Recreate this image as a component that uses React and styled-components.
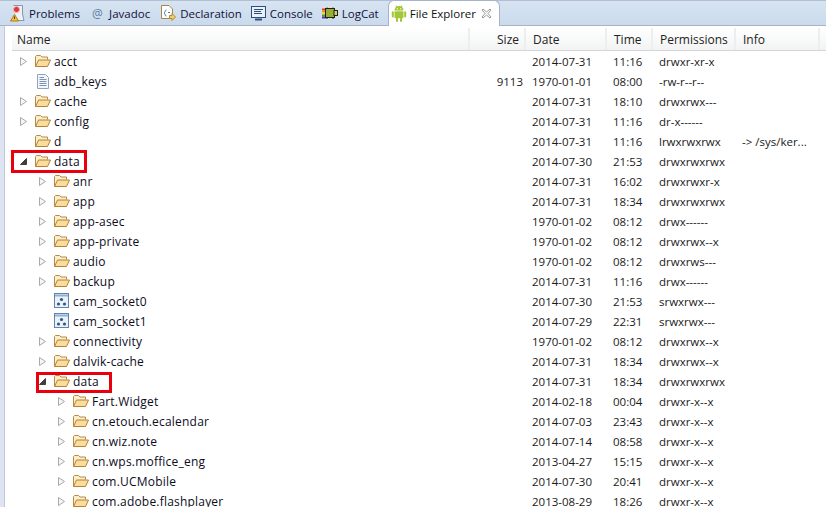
import React from 'react';
import styled, { createGlobalStyle } from 'styled-components';

const GlobalStyle = createGlobalStyle`
    html, body {
        margin: 0;
        padding: 0;
        background: #fff;
    }
    body {
        font-family: "Open Sans", "Noto Sans", sans-serif;
        font-size: 11.5px;
        color: #111;
    }
`

const Page = styled.div`
    width: 826px;
    height: 507px;
    overflow: hidden;
    display: flex;
    flex-direction: column;
    background: #dfe4f2;
`

const TabBar = styled.div`
    height: 26px;
    box-sizing: border-box;
    display: flex;
    align-items: stretch;
    padding-left: 10px;
    background: linear-gradient(#d6e3f1, #cbdbec);
    border-top: 1px solid #b4bdd6;
    border-bottom: 1px solid #a7b3c8;
`

const Tab = styled.div`
    display: flex;
    align-items: center;
    gap: ${p => p.$gap || 4}px;
    margin-right: ${p => p.$right || 0}px;
    color: #10103a;
    white-space: nowrap;
`

const ActiveTab = styled.div`
    height: 26px;
    width: 112px;
    box-sizing: border-box;
    margin-top: -1px;
    padding-left: 2px;
    display: flex;
    align-items: center;
    gap: 3px;
    background: #fff;
    border: 1px solid #a7b3c8;
    border-bottom: none;
    border-radius: 6px 6px 0 0;
    color: #111;
    white-space: nowrap;
`

const AtSign = styled.span`
    width: 12px;
    color: #5b7f9f;
    font-size: 12px;
`

const CloseMark = styled.svg`
    margin-left: 2px;
`

const Body = styled.div`
    flex: 1;
    min-height: 0;
    margin-left: 4px;
    padding-left: 7px;
    padding-top: 2px;
    background: #fff;
    border-left: 1px solid #c3c9dc;
`

const Columns = styled.div`
    display: grid;
    grid-template-columns: 458px 56px 81px 46px 83px 84px 1fr;
    align-items: center;
`

const Header = styled(Columns)`
    height: 22px;
    font-size: 12px;
    background: linear-gradient(#fff, #f2f3f4);
    border-bottom: 1px solid #d5d5d5;
`

const HeaderCell = styled.div`
    height: 100%;
    box-sizing: border-box;
    display: flex;
    align-items: center;
    justify-content: ${p => (p.$right ? 'flex-end' : 'flex-start')};
    padding: ${p => (p.$right ? '0 5px 0 0' : '0 0 0 7px')};
    padding-left: ${p => (p.$first ? 5 : 7)}px;
    border-right: ${p => (p.$last ? 'none' : '2px solid #eceef0')};
    color: #222;
`

const Row = styled(Columns)`
    height: 20px;
`

const NameCell = styled.div`
    position: relative;
    height: 20px;
    display: flex;
    align-items: center;
    padding-left: ${p => 7 + p.$level * 19}px;
`

const Twist = styled.span`
    width: 9px;
    height: 9px;
    margin-right: 7px;
    display: flex;
`

const Label = styled.span`
    margin-left: 3px;
    font-size: 12px;
    letter-spacing: .2px;
    color: #0c0c1c;
    white-space: nowrap;
`

const Highlight = styled.div`
    position: absolute;
    left: ${p => p.$level * 25 - 1}px;
    top: ${p => p.$level * 2 - 1}px;
    width: 76px;
    height: ${p => 23 - p.$level * 2}px;
    box-sizing: border-box;
    border: 3px solid #e8000f;
`

const Cell = styled.div`
    padding-left: 6px;
    white-space: nowrap;
    color: #1a1a1a;
`

const SizeCell = styled.div`
    padding-right: 3px;
    text-align: right;
    color: #1a1a1a;
`

const Collapsed = () => (
    <svg width="9" height="9" viewBox="0 0 9 9">
        <path d="M1.5.5 7.5 4.5 1.5 8.5Z" fill="#f6f6f6" stroke="#a9a9a9" />
    </svg>
)

const Expanded = () => (
    <svg width="9" height="9" viewBox="0 0 9 9">
        <path d="M7.5 1.5V7.5H1.5Z" fill="#3f3f3f" stroke="#3f3f3f" />
    </svg>
)

const FolderIcon = () => (
    <svg width="16" height="14" viewBox="0 0 16 14">
        <path d="M.5 12.5V2.5L1.5 1.5H5.5L7 3H12.5V5.5" fill="#fbeecb" stroke="#b78b46" />
        <path d="M.5 12.5 3.5 6H15.5L12.5 12.5Z" fill="#fadd9a" stroke="#b4823a" strokeLinejoin="round" />
    </svg>
)

const FileIcon = () => (
    <svg width="16" height="16" viewBox="0 0 16 16">
        <path d="M2.5 1.5H10.5L13.5 4.5V15.5H2.5Z" fill="#f2f6fb" stroke="#8fa3bd" />
        <path d="M4.5 6.5H11.5M4.5 8.5H11.5M4.5 10.5H11.5M4.5 12.5H11.5M4.5 4.5H9" stroke="#7d93b4" />
    </svg>
)

const SocketIcon = () => (
    <svg width="16" height="16" viewBox="0 0 16 16">
        <rect x=".5" y=".5" width="14" height="14" fill="#eaf1f9" stroke="#5e83ad" />
        <path d="M1 2.5H14" stroke="#8fb0d4" strokeWidth="2" />
        <circle cx="7.5" cy="6.5" r="1.6" fill="#33587f" />
        <circle cx="4.5" cy="11" r="1.6" fill="#33587f" />
        <circle cx="10.5" cy="11" r="1.6" fill="#33587f" />
    </svg>
)

const ProblemsIcon = () => (
    <svg width="15" height="17" viewBox="0 0 15 17">
        <path d="M3.5.5H12.5V9L14 15.5H7" fill="#eef1f5" stroke="#8b94a8" />
        <circle cx="6.5" cy="4.5" r="3" fill="#e0353a" stroke="#f3b5b5" />
        <path d="M4.5 9.5 8.5 16H.5Z" fill="#f1c232" stroke="#b7791f" strokeLinejoin="round" />
        <path d="M4.5 11.5V14" stroke="#5a3b0c" />
    </svg>
)

const DeclarationIcon = () => (
    <svg width="16" height="17" viewBox="0 0 16 17">
        <path d="M1.5.5H9L12.5 4V13.5H1.5Z" fill="#fff" stroke="#a5854e" />
        <path d="M6.5 5C4.5 5 5.5 7.5 4 8 5.5 8.5 4.5 11 6.5 11" fill="none" stroke="#3f79ad" />
        <path d="M8 7.5H10" stroke="#3f79ad" />
        <path d="M9.5 10.5H12V8.5L15.5 12 12 15.5V13.5H9.5Z" fill="#f3cf62" stroke="#b08a2c" />
    </svg>
)

const ConsoleIcon = () => (
    <svg width="15" height="15" viewBox="0 0 15 15">
        <rect x=".5" y=".5" width="14" height="11" fill="#e9f0f8" stroke="#2f4f78" />
        <path d="M3 3.5H12M3 5.5H10M3 7.5H11" stroke="#2f4f78" />
        <path d="M4 13.5H11" stroke="#2f4f78" strokeWidth="2" />
    </svg>
)

const LogCatIcon = () => (
    <svg width="16" height="12" viewBox="0 0 16 12">
        <path d="M0 1.5H4V3.5H0Z" fill="#e53935" />
        <path d="M0 3.5H4V5.5H0Z" fill="#fb8c00" />
        <path d="M0 5.5H4V7.5H0Z" fill="#fdd835" />
        <path d="M0 7.5H4V9.5H0Z" fill="#43a047" />
        <path d="M0 9.5H4V11.5H0Z" fill="#5e35b1" />
        <rect x="3.5" y="1.5" width="9" height="9" fill="#9aab3a" stroke="#1f2408" />
        <rect x="12" y="3.5" width="3.5" height="5" fill="#c9d27a" stroke="#1f2408" />
        <path d="M5 .5V2M11 .5V2M5 10V12M11 10V12" stroke="#1f2408" />
    </svg>
)

const AndroidIcon = () => (
    <svg width="16" height="17" viewBox="0 0 16 17">
        <g fill="#a4c639">
            <path d="M3.5 5.5A4.5 4.5 0 0 1 12.5 5.5Z" />
            <rect x="3.5" y="6.3" width="9" height="7" rx="1" />
            <rect x=".8" y="6.3" width="2" height="6.2" rx="1" />
            <rect x="13.2" y="6.3" width="2" height="6.2" rx="1" />
            <rect x="5" y="12.5" width="2" height="4.5" rx="1" />
            <rect x="9" y="12.5" width="2" height="4.5" rx="1" />
        </g>
        <path d="M5 .5 6 2.5M11 .5 10 2.5" stroke="#a4c639" />
        <circle cx="6.2" cy="3.7" r=".6" fill="#fff" />
        <circle cx="9.8" cy="3.7" r=".6" fill="#fff" />
    </svg>
)

const rows = [
    { name: 'acct', level: 0, date: '2014-07-31', time: '11:16', perm: 'drwxr-xr-x' },
    { name: 'adb_keys', level: 0, type: 'file', size: '9113', date: '1970-01-01', time: '08:00', perm: '-rw-r--r--' },
    { name: 'cache', level: 0, date: '2014-07-31', time: '18:10', perm: 'drwxrwx---' },
    { name: 'config', level: 0, date: '2014-07-31', time: '11:16', perm: 'dr-x------' },
    { name: 'd', level: 0, noTwist: true, date: '2014-07-31', time: '11:16', perm: 'lrwxrwxrwx', info: '-> /sys/ker...' },
    { name: 'data', level: 0, open: true, marked: true, date: '2014-07-30', time: '21:53', perm: 'drwxrwxrwx' },
    { name: 'anr', level: 1, date: '2014-07-31', time: '16:02', perm: 'drwxrwxr-x' },
    { name: 'app', level: 1, date: '2014-07-31', time: '18:34', perm: 'drwxrwxrwx' },
    { name: 'app-asec', level: 1, date: '1970-01-02', time: '08:12', perm: 'drwx------' },
    { name: 'app-private', level: 1, date: '1970-01-02', time: '08:12', perm: 'drwxrwx--x' },
    { name: 'audio', level: 1, date: '1970-01-02', time: '08:12', perm: 'drwxrws---' },
    { name: 'backup', level: 1, date: '2014-07-31', time: '11:16', perm: 'drwx------' },
    { name: 'cam_socket0', level: 1, type: 'socket', date: '2014-07-30', time: '21:53', perm: 'srwxrwx---' },
    { name: 'cam_socket1', level: 1, type: 'socket', date: '2014-07-29', time: '22:31', perm: 'srwxrwx---' },
    { name: 'connectivity', level: 1, date: '1970-01-02', time: '08:12', perm: 'drwxrwx--x' },
    { name: 'dalvik-cache', level: 1, date: '2014-07-31', time: '18:34', perm: 'drwxrwx--x' },
    { name: 'data', level: 1, open: true, marked: true, date: '2014-07-31', time: '18:34', perm: 'drwxrwxrwx' },
    { name: 'Fart.Widget', level: 2, date: '2014-02-18', time: '00:04', perm: 'drwxr-x--x' },
    { name: 'cn.etouch.ecalendar', level: 2, date: '2014-07-03', time: '23:43', perm: 'drwxr-x--x' },
    { name: 'cn.wiz.note', level: 2, date: '2014-07-14', time: '08:58', perm: 'drwxr-x--x' },
    { name: 'cn.wps.moffice_eng', level: 2, date: '2013-04-27', time: '15:15', perm: 'drwxr-x--x' },
    { name: 'com.UCMobile', level: 2, date: '2014-07-30', time: '20:41', perm: 'drwxr-x--x' },
    { name: 'com.adobe.flashplayer', level: 2, date: '2013-08-29', time: '18:26', perm: 'drwxr-x--x' },
]

const EntryIcon = ({ type }) => {
    if (type === 'file') return <FileIcon />
    if (type === 'socket') return <SocketIcon />
    return <FolderIcon />
}

const Entry = ({ row }) => {
    const leaf = row.type || row.noTwist
    return (
        <Row>
            <NameCell $level={row.level}>
                {row.marked && <Highlight $level={row.level} />}
                <Twist>{!leaf && (row.open ? <Expanded /> : <Collapsed />)}</Twist>
                <EntryIcon type={row.type} />
                <Label>{row.name}</Label>
            </NameCell>
            <SizeCell>{row.size}</SizeCell>
            <Cell>{row.date}</Cell>
            <Cell>{row.time}</Cell>
            <Cell>{row.perm}</Cell>
            <Cell>{row.info}</Cell>
        </Row>
    )
}

export default function App() {
    return (
        <Page>
            <GlobalStyle />
            <TabBar>
                <Tab $right={12}><ProblemsIcon />Problems</Tab>
                <Tab $right={10} $gap={5}><AtSign>@</AtSign>Javadoc</Tab>
                <Tab $right={9}><DeclarationIcon />Declaration</Tab>
                <Tab $right={9}><ConsoleIcon />Console</Tab>
                <Tab $right={9}><LogCatIcon />LogCat</Tab>
                <ActiveTab>
                    <AndroidIcon />
                    File Explorer
                    <CloseMark width="11" height="11" viewBox="0 0 11 11">
                        <path d="M1 2 2 1 5.5 4 9 1 10 2 7 5.5 10 9 9 10 5.5 7 2 10 1 9 4 5.5Z" fill="#fff" stroke="#9a9a9a" />
                    </CloseMark>
                </ActiveTab>
            </TabBar>
            <Body>
                <Header>
                    <HeaderCell $first>Name</HeaderCell>
                    <HeaderCell $right>Size</HeaderCell>
                    <HeaderCell>Date</HeaderCell>
                    <HeaderCell>Time</HeaderCell>
                    <HeaderCell>Permissions</HeaderCell>
                    <HeaderCell>Info</HeaderCell>
                    <HeaderCell $last />
                </Header>
                {rows.map((row, i) => <Entry key={i} row={row} />)}
            </Body>
        </Page>
    )
}
